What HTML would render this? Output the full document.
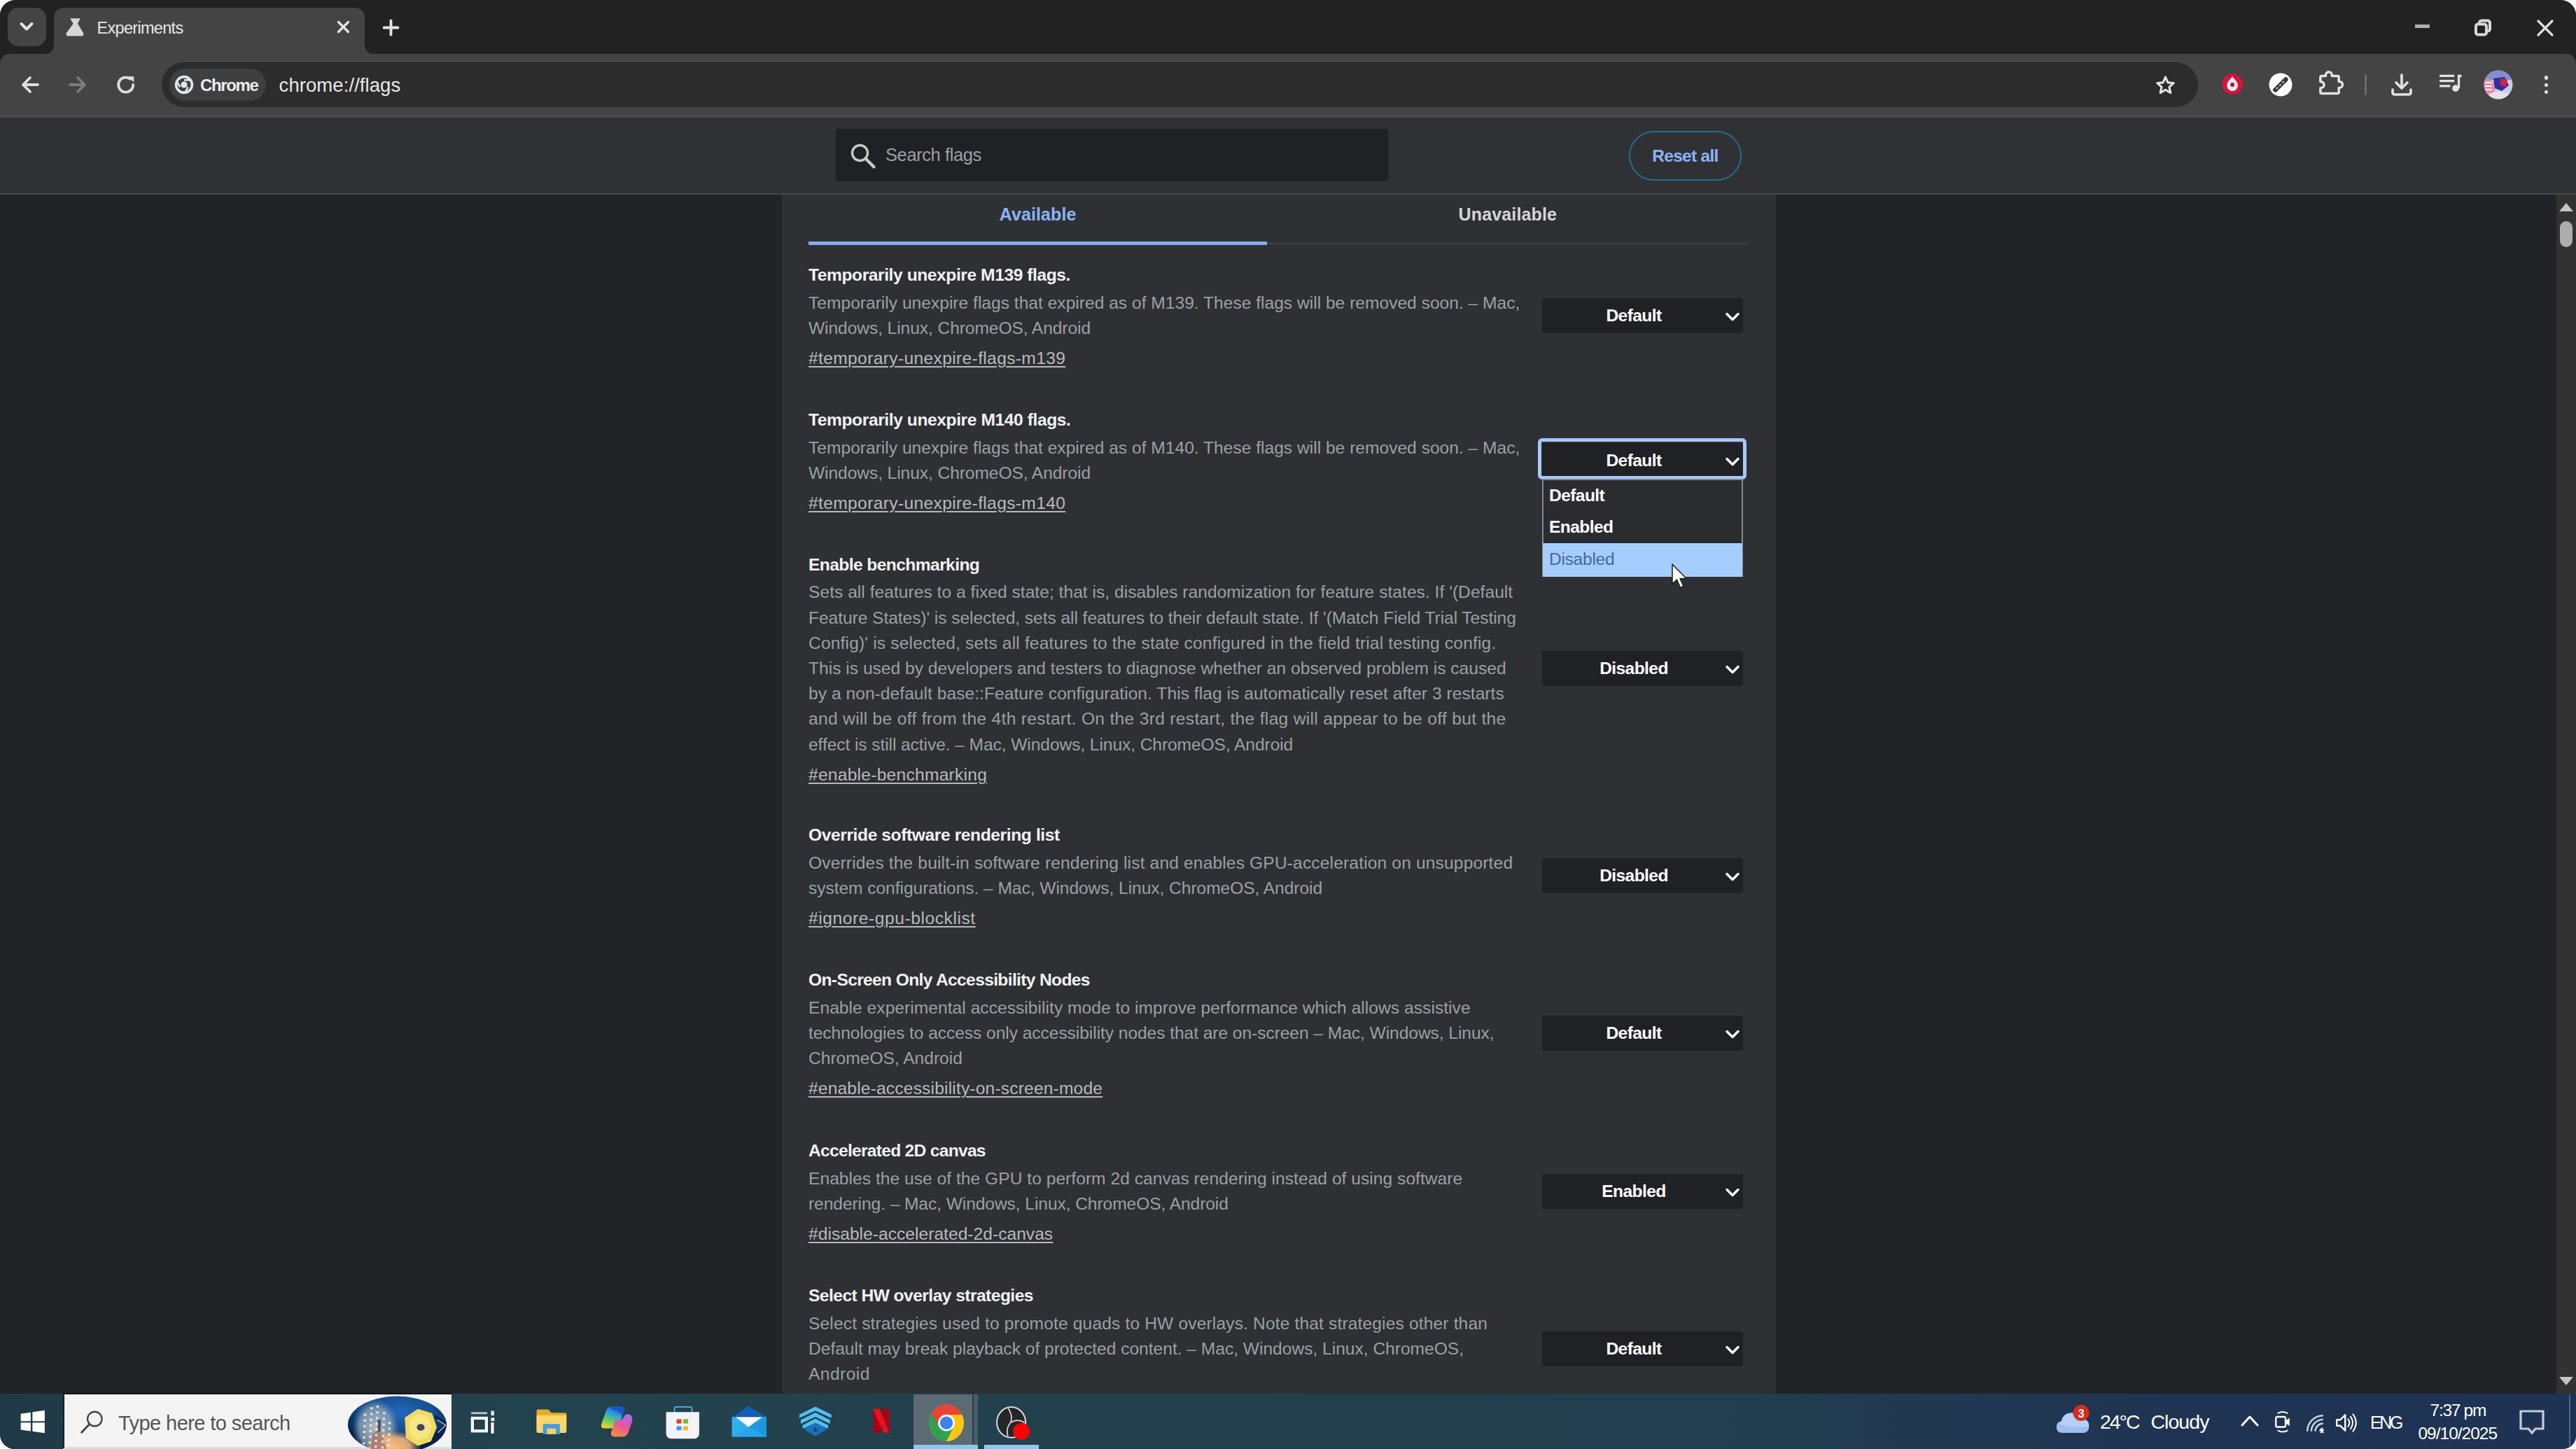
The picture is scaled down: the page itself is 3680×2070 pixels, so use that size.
<!DOCTYPE html>
<html lang="en"><head><meta charset="utf-8"><title>Experiments</title>
<style>
html,body{margin:0;padding:0;background:#fff;}
body{width:3680px;height:2070px;overflow:hidden;font-family:"Liberation Sans", sans-serif;position:relative;}
#screen{position:absolute;left:0;top:0;width:3680px;height:2070px;border-radius:22px 22px 19px 21px;overflow:hidden;background:#202124;}
#screen div, #screen svg{box-sizing:border-box;}
.u{text-decoration:underline;text-decoration-thickness:2px;text-underline-offset:3px;}
</style></head><body><div id="screen">
<div style="position:absolute;left:0px;top:0px;width:3680px;height:80px;background:#222222;"></div>
<div style="position:absolute;left:11px;top:11px;width:55px;height:55px;background:#444444;border-radius:15px;"></div>
<svg style="position:absolute;left:27px;top:29px;" width="22" height="18" viewBox="0 0 22 18"><path d="M3.5 5 L11 12.5 L18.5 5" fill="none" stroke="#e3e3e3" stroke-width="4" stroke-linecap="round" stroke-linejoin="round"/></svg>
<div style="position:absolute;left:0px;top:77px;width:3680px;height:88px;background:#444444;border-radius:14px 14px 0 0;"></div>
<svg style="position:absolute;left:61px;top:11px;" width="476" height="67" viewBox="0 0 476 67"><path d="M0 67 Q16 67 16 51 L16 16 Q16 0 32 0 L444 0 Q460 0 460 16 L460 51 Q460 67 476 67 Z" fill="#444444"/></svg>
<svg style="position:absolute;left:93.0px;top:24.8px;" width="27.9" height="27.5" viewBox="280 210 600 590"><path d="M450 235 H730 Q742 235 738 250 L668 400 L842 690 Q868 776 790 778 H370 Q292 776 318 690 L532 400 L442 250 Q438 235 450 235 Z" fill="#d6d6d6"/></svg>
<div class="" style="position:absolute;top:24.9px;height:31px;line-height:31px;font-size:23.5px;color:#e8e8e8;font-weight:normal;white-space:nowrap;letter-spacing:-0.692px;left:138.5px;">Experiments</div>
<svg style="position:absolute;left:480.3px;top:28.3px;" width="21" height="21" viewBox="0 0 24 24"><path d="M4 4 L20 20 M20 4 L4 20" stroke="#e3e3e3" stroke-width="3.9" stroke-linecap="round"/></svg>
<svg style="position:absolute;left:546.2px;top:27px;" width="25" height="25" viewBox="0 0 30 30"><path d="M15 3 V27 M3 15 H27" stroke="#e3e3e3" stroke-width="4.6" stroke-linecap="round"/></svg>
<div style="position:absolute;left:3450px;top:35px;width:21px;height:5px;background:#b0b0b0;"></div>
<svg style="position:absolute;left:3534px;top:27px;" width="26" height="26" viewBox="0 0 26 26"><rect x="8" y="2.5" width="15" height="15" rx="3" fill="none" stroke="#d8d8d8" stroke-width="4"/><rect x="3" y="7.5" width="15" height="15" rx="3" fill="#222" stroke="#d8d8d8" stroke-width="4"/></svg>
<svg style="position:absolute;left:3623px;top:27px;" width="26" height="26" viewBox="0 0 26 26"><path d="M3 3 L23 23 M23 3 L3 23" stroke="#dddddd" stroke-width="3.2" stroke-linecap="round"/></svg>
<svg style="position:absolute;left:29px;top:107px;" width="28" height="28" viewBox="0 0 28 28"><path d="M25 14 H5 M14 4 L4 14 L14 24" fill="none" stroke="#dedede" stroke-width="3.8" stroke-linecap="round" stroke-linejoin="round"/></svg>
<svg style="position:absolute;left:97px;top:107px;" width="28" height="28" viewBox="0 0 28 28"><path d="M3 14 H23 M14 4 L24 14 L14 24" fill="none" stroke="#7d7d7d" stroke-width="3.8" stroke-linecap="round" stroke-linejoin="round"/></svg>
<svg style="position:absolute;left:165px;top:106px;" width="30" height="30" viewBox="0 0 28 28"><path d="M23.5 14 A9.8 9.8 0 1 1 19.5 6.2" fill="none" stroke="#dedede" stroke-width="3.6" stroke-linecap="round"/><path d="M16.5 3 H24.5 V11 Z" fill="#dedede"/></svg>
<div style="position:absolute;left:231px;top:89px;width:2909px;height:64px;background:#2c2c2c;border-radius:32px;"></div>
<div style="position:absolute;left:242px;top:98px;width:138px;height:46px;background:#3e3f41;border-radius:23px;"></div>
<svg style="position:absolute;left:249px;top:107px;" width="28" height="28" viewBox="0 0 28 28"><circle cx="14" cy="14" r="11.4" fill="none" stroke="#e6e6e6" stroke-width="3.6"/><circle cx="14" cy="14" r="4.6" fill="#e6e6e6"/><circle cx="14" cy="14" r="6.6" fill="none" stroke="#3e3f41" stroke-width="1.6"/><path d="M14 7.4 H24.6 M8.3 17.3 L3 8.2 M19.7 17.3 L14.4 26.4" stroke="#e6e6e6" stroke-width="2.6"/></svg>
<div class="" style="position:absolute;top:105.8px;height:31px;line-height:31px;font-size:24px;color:#ececec;font-weight:bold;white-space:nowrap;letter-spacing:-1.365px;left:286px;">Chrome</div>
<div class="" style="position:absolute;top:103.6px;height:36px;line-height:36px;font-size:27.5px;color:#e8e8e8;font-weight:normal;white-space:nowrap;letter-spacing:0.07px;left:398.6px;">chrome://flags</div>
<svg style="position:absolute;left:3079px;top:107px;" width="29" height="29" viewBox="0 0 32 32"><path d="M16 3.5 L19.8 12 L29 12.9 L22 19.1 L24.1 28.2 L16 23.4 L7.9 28.2 L10 19.1 L3 12.9 L12.2 12 Z" fill="none" stroke="#e3e3e3" stroke-width="3.4" stroke-linejoin="round"/></svg>
<svg style="position:absolute;left:3173.5px;top:105.4px;" width="30.3" height="30.3" viewBox="975 175 260 260"><circle cx="1105" cy="305" r="127" fill="#d8123f"/><path d="M1105 212 C1130 250 1172 275 1172 322 A67 67 0 0 1 1038 322 C1038 275 1080 250 1105 212 Z" fill="#ffe9ef"/><circle cx="1105" cy="312" r="25" fill="#a80f30"/></svg>
<svg style="position:absolute;left:3241px;top:104px;" width="34" height="34" viewBox="0 0 34 34"><circle cx="17" cy="17" r="16.5" fill="#ffffff"/><path d="M9.5 24.5 L24.5 9.5" stroke="#3a3a3a" stroke-width="6.5" stroke-linecap="round"/><path d="M11 23 L23 11" stroke="#e8e8e8" stroke-width="1.6" stroke-dasharray="3 3"/></svg>
<svg style="position:absolute;left:3310.4px;top:100.1px;" width="38.4" height="37.3" viewBox="2150 130 330 320"><path d="M2192 217 Q2192 202 2207 202 H2257 V192 a38 38 0 0 1 76 0 V202 H2403 Q2418 202 2418 217 V272 H2426 a38 38 0 0 1 0 76 H2418 V403 Q2418 418 2403 418 H2207 Q2192 418 2192 403 V350 H2198 a38 38 0 0 0 0 -76 H2192 Z" fill="none" stroke="#e3e3e3" stroke-width="30" stroke-linejoin="round"/></svg>
<div style="position:absolute;left:3378px;top:106px;width:3px;height:30px;background:#6c6c6c;border-radius:2px;"></div>
<svg style="position:absolute;left:3413px;top:103px;" width="36" height="36" viewBox="0 0 36 36"><path d="M18 4 V22 M10 15 L18 23 L26 15" fill="none" stroke="#e3e3e3" stroke-width="3.6" stroke-linecap="round" stroke-linejoin="round"/><path d="M5 25 V29 Q5 32 8 32 H28 Q31 32 31 29 V25" fill="none" stroke="#e3e3e3" stroke-width="3.6" stroke-linecap="round"/></svg>
<svg style="position:absolute;left:3482.5px;top:104.8px;" width="34.9" height="27.9" viewBox="880 170 300 240"><path d="M898 200 H1080 M898 262 H1080 M898 324 H1030" stroke="#e3e3e3" stroke-width="28"/><path d="M1134 196 V350" stroke="#e3e3e3" stroke-width="28"/><path d="M1120 200 H1168" stroke="#e3e3e3" stroke-width="30"/><circle cx="1095" cy="352" r="42" fill="#e3e3e3"/></svg>
<svg style="position:absolute;left:3548px;top:100px;" width="42" height="42" viewBox="0 0 42 42"><defs><clipPath id="av"><circle cx="21" cy="21" r="20.5"/></clipPath></defs><g clip-path="url(#av)"><rect width="42" height="42" fill="#c9cde6"/><rect x="0" y="0" width="42" height="14" fill="#7f8fd0"/><path d="M0 14 Q8 10 14 18 T12 34 L0 36 Z" fill="#e78aa0"/><path d="M2 18 h10 M2 23 h10 M3 28 h9" stroke="#fff" stroke-width="2"/><path d="M14 12 L30 10 L36 22 L26 30 L16 26 Z" fill="#2a2fa8"/><path d="M24 12 L34 14 L32 24 L24 22 Z" fill="#d8203a"/><path d="M8 34 Q21 28 36 34 L36 42 L8 42 Z" fill="#e9dfe4"/></g></svg>
<div style="position:absolute;left:3634.6px;top:108.4px;width:5.6px;height:5.6px;background:#e3e3e3;border-radius:50%;"></div>
<div style="position:absolute;left:3634.6px;top:118.5px;width:5.6px;height:5.6px;background:#e3e3e3;border-radius:50%;"></div>
<div style="position:absolute;left:3634.6px;top:128.79999999999998px;width:5.6px;height:5.6px;background:#e3e3e3;border-radius:50%;"></div>
<div style="position:absolute;left:0px;top:165px;width:3680px;height:1828px;background:#222327;"></div>
<div style="position:absolute;left:1117px;top:278px;width:1420px;height:1715px;background:#2e3033;"></div>
<div style="position:absolute;left:0px;top:165px;width:3680px;height:112px;background:#303134;"></div>
<div style="position:absolute;left:0px;top:165px;width:3680px;height:3px;background:#4a4a4a;"></div>
<div style="position:absolute;left:0px;top:276px;width:3680px;height:2px;background:#46484b;"></div>
<div style="position:absolute;left:1194px;top:184px;width:789px;height:75px;background:#202124;border-radius:4px;"></div>
<svg style="position:absolute;left:1212px;top:202px;" width="42" height="42" viewBox="0 0 42 42"><circle cx="16.5" cy="16.5" r="11" fill="none" stroke="#c8c8c8" stroke-width="3.4"/><path d="M24.5 24.5 L36.5 36.5" stroke="#c8c8c8" stroke-width="4.4" stroke-linecap="round"/></svg>
<div class="" style="position:absolute;top:204.7px;height:33px;line-height:33px;font-size:25.5px;color:#9aa0a6;font-weight:normal;white-space:nowrap;letter-spacing:-0.4px;left:1265px;">Search flags</div>
<div style="position:absolute;left:2327px;top:187px;width:161px;height:71px;background:transparent;border:2.5px solid #1f6f8f;border-radius:36px;"></div>
<div class="" style="position:absolute;top:207.3px;height:32px;line-height:32px;font-size:24.5px;color:#8ab4f8;font-weight:bold;white-space:nowrap;letter-spacing:-0.7px;left:1407.5px;width:2000px;text-align:center;">Reset all</div>
<div class="" style="position:absolute;top:290.2px;height:32px;line-height:32px;font-size:25px;color:#8ab4f8;font-weight:bold;white-space:nowrap;letter-spacing:0.116px;left:1427.7px;">Available</div>
<div class="" style="position:absolute;top:290.2px;height:32px;line-height:32px;font-size:25px;color:#d5d7da;font-weight:bold;white-space:nowrap;letter-spacing:0.141px;left:2083.6px;">Unavailable</div>
<div style="position:absolute;left:1155px;top:347px;width:1342px;height:2px;background:#3f4144;"></div>
<div style="position:absolute;left:1155px;top:344.5px;width:655px;height:5px;background:#84adf0;"></div>
<div style="position:absolute;left:3652px;top:278px;width:28px;height:1715px;background:#323232;"></div>
<svg style="position:absolute;left:3655px;top:289px;" width="22" height="14" viewBox="0 0 22 14"><path d="M11 1 L21 13 H1 Z" fill="#c4c4c4"/></svg>
<svg style="position:absolute;left:3655px;top:1966px;" width="22" height="14" viewBox="0 0 22 14"><path d="M11 13 L21 1 H1 Z" fill="#c4c4c4"/></svg>
<div style="position:absolute;left:3657px;top:316px;width:18px;height:37px;background:#adadad;border-radius:9px;"></div>
<div class="" style="position:absolute;top:377.3px;height:32px;line-height:32px;font-size:24.6px;color:#f1f3f4;font-weight:bold;white-space:nowrap;letter-spacing:-0.429px;left:1155px;">Temporarily unexpire M139 flags.</div>
<div class="" style="position:absolute;top:416.8px;height:32px;line-height:32px;font-size:24.6px;color:#9aa0a6;font-weight:normal;white-space:nowrap;letter-spacing:-0.002px;left:1155px;">Temporarily unexpire flags that expired as of M139. These flags will be removed soon. – Mac,</div>
<div class="" style="position:absolute;top:453.0px;height:32px;line-height:32px;font-size:24.6px;color:#9aa0a6;font-weight:normal;white-space:nowrap;letter-spacing:-0.09px;left:1155px;">Windows, Linux, ChromeOS, Android</div>
<div class="u" style="position:absolute;top:496.0px;height:32px;line-height:32px;font-size:24.6px;color:#b6babf;font-weight:normal;white-space:nowrap;letter-spacing:0.351px;left:1155px;">#temporary-unexpire-flags-m139</div>
<div style="position:absolute;left:2203px;top:425.85px;width:287px;height:50px;background:#202124;border-radius:3px;"></div>
<div class="" style="position:absolute;top:435.1px;height:32px;line-height:32px;font-size:24.6px;color:#ffffff;font-weight:bold;white-space:nowrap;letter-spacing:-0.6px;left:1334px;width:2000px;text-align:center;">Default</div>
<svg style="position:absolute;left:2463px;top:443.85px;" width="24" height="18" viewBox="0 0 24 18"><path d="M4 4.5 L12 12.5 L20 4.5" fill="none" stroke="#ffffff" stroke-width="3.5" stroke-linecap="round" stroke-linejoin="round"/></svg>
<div class="" style="position:absolute;top:584.3px;height:32px;line-height:32px;font-size:24.6px;color:#f1f3f4;font-weight:bold;white-space:nowrap;letter-spacing:-0.413px;left:1155px;">Temporarily unexpire M140 flags.</div>
<div class="" style="position:absolute;top:623.8px;height:32px;line-height:32px;font-size:24.6px;color:#9aa0a6;font-weight:normal;white-space:nowrap;letter-spacing:-0.002px;left:1155px;">Temporarily unexpire flags that expired as of M140. These flags will be removed soon. – Mac,</div>
<div class="" style="position:absolute;top:660.0px;height:32px;line-height:32px;font-size:24.6px;color:#9aa0a6;font-weight:normal;white-space:nowrap;letter-spacing:-0.09px;left:1155px;">Windows, Linux, ChromeOS, Android</div>
<div class="u" style="position:absolute;top:703.0px;height:32px;line-height:32px;font-size:24.6px;color:#b6babf;font-weight:normal;white-space:nowrap;letter-spacing:0.351px;left:1155px;">#temporary-unexpire-flags-m140</div>
<div style="position:absolute;left:2203px;top:632.85px;width:287px;height:50px;background:#202124;border-radius:3px;"></div>
<div class="" style="position:absolute;top:642.1px;height:32px;line-height:32px;font-size:24.6px;color:#ffffff;font-weight:bold;white-space:nowrap;letter-spacing:-0.6px;left:1334px;width:2000px;text-align:center;">Default</div>
<svg style="position:absolute;left:2463px;top:650.85px;" width="24" height="18" viewBox="0 0 24 18"><path d="M4 4.5 L12 12.5 L20 4.5" fill="none" stroke="#ffffff" stroke-width="3.5" stroke-linecap="round" stroke-linejoin="round"/></svg>
<div class="" style="position:absolute;top:790.8px;height:32px;line-height:32px;font-size:24.6px;color:#f1f3f4;font-weight:bold;white-space:nowrap;letter-spacing:-0.594px;left:1155px;">Enable benchmarking</div>
<div class="" style="position:absolute;top:830.3px;height:32px;line-height:32px;font-size:24.6px;color:#9aa0a6;font-weight:normal;white-space:nowrap;letter-spacing:0.022px;left:1155px;">Sets all features to a fixed state; that is, disables randomization for feature states. If &#x27;(Default</div>
<div class="" style="position:absolute;top:866.5px;height:32px;line-height:32px;font-size:24.6px;color:#9aa0a6;font-weight:normal;white-space:nowrap;letter-spacing:-0.068px;left:1155px;">Feature States)&#x27; is selected, sets all features to their default state. If &#x27;(Match Field Trial Testing</div>
<div class="" style="position:absolute;top:902.7px;height:32px;line-height:32px;font-size:24.6px;color:#9aa0a6;font-weight:normal;white-space:nowrap;letter-spacing:0.156px;left:1155px;">Config)&#x27; is selected, sets all features to the state configured in the field trial testing config.</div>
<div class="" style="position:absolute;top:938.9px;height:32px;line-height:32px;font-size:24.6px;color:#9aa0a6;font-weight:normal;white-space:nowrap;left:1155px;">This is used by developers and testers to diagnose whether an observed problem is caused</div>
<div class="" style="position:absolute;top:975.1px;height:32px;line-height:32px;font-size:24.6px;color:#9aa0a6;font-weight:normal;white-space:nowrap;letter-spacing:0.033px;left:1155px;">by a non-default base::Feature configuration. This flag is automatically reset after 3 restarts</div>
<div class="" style="position:absolute;top:1011.3px;height:32px;line-height:32px;font-size:24.6px;color:#9aa0a6;font-weight:normal;white-space:nowrap;letter-spacing:0.308px;left:1155px;">and will be off from the 4th restart. On the 3rd restart, the flag will appear to be off but the</div>
<div class="" style="position:absolute;top:1047.5px;height:32px;line-height:32px;font-size:24.6px;color:#9aa0a6;font-weight:normal;white-space:nowrap;letter-spacing:-0.091px;left:1155px;">effect is still active. – Mac, Windows, Linux, ChromeOS, Android</div>
<div class="u" style="position:absolute;top:1090.5px;height:32px;line-height:32px;font-size:24.6px;color:#b6babf;font-weight:normal;white-space:nowrap;letter-spacing:0.245px;left:1155px;">#enable-benchmarking</div>
<div style="position:absolute;left:2203px;top:929.85px;width:287px;height:50px;background:#202124;border-radius:3px;"></div>
<div class="" style="position:absolute;top:939.1px;height:32px;line-height:32px;font-size:24.6px;color:#ffffff;font-weight:bold;white-space:nowrap;letter-spacing:-0.6px;left:1334px;width:2000px;text-align:center;">Disabled</div>
<svg style="position:absolute;left:2463px;top:947.85px;" width="24" height="18" viewBox="0 0 24 18"><path d="M4 4.5 L12 12.5 L20 4.5" fill="none" stroke="#ffffff" stroke-width="3.5" stroke-linecap="round" stroke-linejoin="round"/></svg>
<div class="" style="position:absolute;top:1177.3px;height:32px;line-height:32px;font-size:24.6px;color:#f1f3f4;font-weight:bold;white-space:nowrap;letter-spacing:-0.405px;left:1155px;">Override software rendering list</div>
<div class="" style="position:absolute;top:1216.8px;height:32px;line-height:32px;font-size:24.6px;color:#9aa0a6;font-weight:normal;white-space:nowrap;letter-spacing:0.137px;left:1155px;">Overrides the built-in software rendering list and enables GPU-acceleration on unsupported</div>
<div class="" style="position:absolute;top:1253.0px;height:32px;line-height:32px;font-size:24.6px;color:#9aa0a6;font-weight:normal;white-space:nowrap;letter-spacing:-0.064px;left:1155px;">system configurations. – Mac, Windows, Linux, ChromeOS, Android</div>
<div class="u" style="position:absolute;top:1296.0px;height:32px;line-height:32px;font-size:24.6px;color:#b6babf;font-weight:normal;white-space:nowrap;letter-spacing:0.56px;left:1155px;">#ignore-gpu-blocklist</div>
<div style="position:absolute;left:2203px;top:1225.85px;width:287px;height:50px;background:#202124;border-radius:3px;"></div>
<div class="" style="position:absolute;top:1235.1px;height:32px;line-height:32px;font-size:24.6px;color:#ffffff;font-weight:bold;white-space:nowrap;letter-spacing:-0.6px;left:1334px;width:2000px;text-align:center;">Disabled</div>
<svg style="position:absolute;left:2463px;top:1243.85px;" width="24" height="18" viewBox="0 0 24 18"><path d="M4 4.5 L12 12.5 L20 4.5" fill="none" stroke="#ffffff" stroke-width="3.5" stroke-linecap="round" stroke-linejoin="round"/></svg>
<div class="" style="position:absolute;top:1384.3px;height:32px;line-height:32px;font-size:24.6px;color:#f1f3f4;font-weight:bold;white-space:nowrap;letter-spacing:-0.655px;left:1155px;">On-Screen Only Accessibility Nodes</div>
<div class="" style="position:absolute;top:1423.8px;height:32px;line-height:32px;font-size:24.6px;color:#9aa0a6;font-weight:normal;white-space:nowrap;letter-spacing:0.029px;left:1155px;">Enable experimental accessibility mode to improve performance which allows assistive</div>
<div class="" style="position:absolute;top:1460.0px;height:32px;line-height:32px;font-size:24.6px;color:#9aa0a6;font-weight:normal;white-space:nowrap;letter-spacing:-0.068px;left:1155px;">technologies to access only accessibility nodes that are on-screen – Mac, Windows, Linux,</div>
<div class="" style="position:absolute;top:1496.2px;height:32px;line-height:32px;font-size:24.6px;color:#9aa0a6;font-weight:normal;white-space:nowrap;letter-spacing:-0.011px;left:1155px;">ChromeOS, Android</div>
<div class="u" style="position:absolute;top:1539.2px;height:32px;line-height:32px;font-size:24.6px;color:#b6babf;font-weight:normal;white-space:nowrap;letter-spacing:0.164px;left:1155px;">#enable-accessibility-on-screen-mode</div>
<div style="position:absolute;left:2203px;top:1450.95px;width:287px;height:50px;background:#202124;border-radius:3px;"></div>
<div class="" style="position:absolute;top:1460.2px;height:32px;line-height:32px;font-size:24.6px;color:#ffffff;font-weight:bold;white-space:nowrap;letter-spacing:-0.6px;left:1334px;width:2000px;text-align:center;">Default</div>
<svg style="position:absolute;left:2463px;top:1468.95px;" width="24" height="18" viewBox="0 0 24 18"><path d="M4 4.5 L12 12.5 L20 4.5" fill="none" stroke="#ffffff" stroke-width="3.5" stroke-linecap="round" stroke-linejoin="round"/></svg>
<div class="" style="position:absolute;top:1628.3px;height:32px;line-height:32px;font-size:24.6px;color:#f1f3f4;font-weight:bold;white-space:nowrap;letter-spacing:-0.722px;left:1155px;">Accelerated 2D canvas</div>
<div class="" style="position:absolute;top:1667.8px;height:32px;line-height:32px;font-size:24.6px;color:#9aa0a6;font-weight:normal;white-space:nowrap;letter-spacing:0.022px;left:1155px;">Enables the use of the GPU to perform 2d canvas rendering instead of using software</div>
<div class="" style="position:absolute;top:1704.0px;height:32px;line-height:32px;font-size:24.6px;color:#9aa0a6;font-weight:normal;white-space:nowrap;letter-spacing:-0.086px;left:1155px;">rendering. – Mac, Windows, Linux, ChromeOS, Android</div>
<div class="u" style="position:absolute;top:1747.0px;height:32px;line-height:32px;font-size:24.6px;color:#b6babf;font-weight:normal;white-space:nowrap;letter-spacing:0.019px;left:1155px;">#disable-accelerated-2d-canvas</div>
<div style="position:absolute;left:2203px;top:1676.85px;width:287px;height:50px;background:#202124;border-radius:3px;"></div>
<div class="" style="position:absolute;top:1686.1px;height:32px;line-height:32px;font-size:24.6px;color:#ffffff;font-weight:bold;white-space:nowrap;letter-spacing:-0.6px;left:1334px;width:2000px;text-align:center;">Enabled</div>
<svg style="position:absolute;left:2463px;top:1694.85px;" width="24" height="18" viewBox="0 0 24 18"><path d="M4 4.5 L12 12.5 L20 4.5" fill="none" stroke="#ffffff" stroke-width="3.5" stroke-linecap="round" stroke-linejoin="round"/></svg>
<div class="" style="position:absolute;top:1835.3px;height:32px;line-height:32px;font-size:24.6px;color:#f1f3f4;font-weight:bold;white-space:nowrap;letter-spacing:-0.549px;left:1155px;">Select HW overlay strategies</div>
<div class="" style="position:absolute;top:1874.8px;height:32px;line-height:32px;font-size:24.6px;color:#9aa0a6;font-weight:normal;white-space:nowrap;letter-spacing:0.135px;left:1155px;">Select strategies used to promote quads to HW overlays. Note that strategies other than</div>
<div class="" style="position:absolute;top:1911.0px;height:32px;line-height:32px;font-size:24.6px;color:#9aa0a6;font-weight:normal;white-space:nowrap;letter-spacing:-0.021px;left:1155px;">Default may break playback of protected content. – Mac, Windows, Linux, ChromeOS,</div>
<div class="" style="position:absolute;top:1947.2px;height:32px;line-height:32px;font-size:24.6px;color:#9aa0a6;font-weight:normal;white-space:nowrap;letter-spacing:0.446px;left:1155px;">Android</div>
<div style="position:absolute;left:2203px;top:1901.95px;width:287px;height:50px;background:#202124;border-radius:3px;"></div>
<div class="" style="position:absolute;top:1911.2px;height:32px;line-height:32px;font-size:24.6px;color:#ffffff;font-weight:bold;white-space:nowrap;letter-spacing:-0.6px;left:1334px;width:2000px;text-align:center;">Default</div>
<svg style="position:absolute;left:2463px;top:1919.95px;" width="24" height="18" viewBox="0 0 24 18"><path d="M4 4.5 L12 12.5 L20 4.5" fill="none" stroke="#ffffff" stroke-width="3.5" stroke-linecap="round" stroke-linejoin="round"/></svg>
<div style="position:absolute;left:2197px;top:626px;width:298px;height:59px;background:transparent;border:5px solid #a8c7fa;border-radius:6px;"></div>
<div style="position:absolute;left:2203px;top:684px;width:287px;height:140px;background:#2b2c2f;border:2px solid #85888c;border-bottom:none;"></div>
<div class="" style="position:absolute;top:691.8px;height:32px;line-height:32px;font-size:24.6px;color:#ffffff;font-weight:bold;white-space:nowrap;letter-spacing:-0.6px;left:2213px;">Default</div>
<div class="" style="position:absolute;top:737.3px;height:32px;line-height:32px;font-size:24.6px;color:#ffffff;font-weight:bold;white-space:nowrap;letter-spacing:-0.6px;left:2213px;">Enabled</div>
<div style="position:absolute;left:2204px;top:776px;width:285px;height:48px;background:#a5cdfd;"></div>
<div class="" style="position:absolute;top:783.3px;height:32px;line-height:32px;font-size:24.6px;color:#46689f;font-weight:normal;white-space:nowrap;letter-spacing:-0.3px;left:2213px;">Disabled</div>
<svg style="position:absolute;left:2387px;top:804px;" width="26" height="40" viewBox="0 0 26 40"><path d="M2 2 L2 30 L8.5 24 L13.5 35.5 L18 33.5 L13 22.5 L22 22.5 Z" fill="#ffffff" stroke="#222" stroke-width="1.6" stroke-linejoin="round"/></svg>
<div style="position:absolute;left:0px;top:1991px;width:3680px;height:79px;background:linear-gradient(90deg,#1f3a46 0%,#22424e 20%,#233f4c 55%,#223d4f 68%,#203851 76%,#1f3452 84%,#1e3254 100%);"></div>
<svg style="position:absolute;left:27.5px;top:2013.3px;" width="37.5" height="36" viewBox="0 0 46 44"><path d="M2 8.2 L19.5 5.6 V21 H2 Z M22.5 5.2 L44 2 V21 H22.5 Z M2 23.5 H19.5 V38.6 L2 36 Z M22.5 23.5 H44 V42 L22.5 39 Z" fill="#ffffff"/></svg>
<div style="position:absolute;left:90px;top:1990px;width:555px;height:80px;background:#f4f4f4;border-top:2.5px solid #10151b;border-left:2px solid #10202a;border-bottom:3px solid #dcdcdc;"></div>
<svg style="position:absolute;left:112.5px;top:2014.5px;" width="37" height="37" viewBox="0 0 36 36"><circle cx="21.7" cy="11.7" r="10" fill="none" stroke="#444" stroke-width="2.3"/><path d="M14.5 19 L3.5 30.5" stroke="#444" stroke-width="2.8" stroke-linecap="round"/></svg>
<div class="" style="position:absolute;top:2014.0px;height:38px;line-height:38px;font-size:29px;color:#555555;font-weight:normal;white-space:nowrap;letter-spacing:-0.57px;left:169px;">Type here to search</div>
<svg style="position:absolute;left:496.4px;top:1994.3px;" width="142.9" height="75.7" viewBox="340 120 1840 975"><defs><clipPath id="sh"><ellipse cx="1260" cy="650" rx="908" ry="522"/></clipPath><radialGradient id="shg" cx="0.52" cy="0.3" r="0.62"><stop offset="0" stop-color="#2566bd"/><stop offset="0.55" stop-color="#154f8f"/><stop offset="1" stop-color="#07214a"/></radialGradient><radialGradient id="shl" cx="0.5" cy="0.5" r="0.5"><stop offset="0" stop-color="#b9c3c4" stop-opacity="0.95"/><stop offset="0.7" stop-color="#8fa4b4" stop-opacity="0.75"/><stop offset="1" stop-color="#5f86ab" stop-opacity="0"/></radialGradient><radialGradient id="sho" cx="0.5" cy="0.5" r="0.5"><stop offset="0" stop-color="#f6c07c"/><stop offset="0.6" stop-color="#eeb27a" stop-opacity="0.9"/><stop offset="1" stop-color="#e0a070" stop-opacity="0"/></radialGradient></defs><g clip-path="url(#sh)"><rect x="340" y="120" width="1840" height="980" fill="url(#shg)"/><ellipse cx="860" cy="700" rx="430" ry="520" fill="url(#shl)"/><ellipse cx="1180" cy="1060" rx="520" ry="300" fill="url(#sho)"/><path d="M820 820 Q900 700 980 820 L1060 1095 H760 Z" fill="#a8766a" opacity="0.8"/><path d="M900 560 L960 560 L950 780 L905 780 Z" fill="#2a2a32" opacity="0.7"/><rect x="648" y="450" width="44" height="40" fill="#f4f2ea" opacity="0.85"/><rect x="643" y="555" width="44" height="40" fill="#f4f2ea" opacity="0.85"/><rect x="638" y="660" width="44" height="40" fill="#f4f2ea" opacity="0.85"/><rect x="632" y="765" width="44" height="40" fill="#f4f2ea" opacity="0.85"/><rect x="627" y="870" width="44" height="40" fill="#f4f2ea" opacity="0.85"/><rect x="622" y="975" width="44" height="40" fill="#f4f2ea" opacity="0.85"/><rect x="768" y="330" width="44" height="40" fill="#f4f2ea" opacity="0.85"/><rect x="763" y="435" width="44" height="40" fill="#f4f2ea" opacity="0.85"/><rect x="758" y="540" width="44" height="40" fill="#f4f2ea" opacity="0.85"/><rect x="752" y="645" width="44" height="40" fill="#f4f2ea" opacity="0.85"/><rect x="747" y="750" width="44" height="40" fill="#f4f2ea" opacity="0.85"/><rect x="742" y="855" width="44" height="40" fill="#f4f2ea" opacity="0.85"/><rect x="736" y="960" width="44" height="40" fill="#f4f2ea" opacity="0.85"/><rect x="731" y="1065" width="44" height="40" fill="#f4f2ea" opacity="0.85"/><rect x="878" y="300" width="44" height="40" fill="#f4f2ea" opacity="0.85"/><rect x="873" y="405" width="44" height="40" fill="#f4f2ea" opacity="0.85"/><rect x="868" y="510" width="44" height="40" fill="#f4f2ea" opacity="0.85"/><rect x="862" y="615" width="44" height="40" fill="#f4f2ea" opacity="0.85"/><rect x="857" y="720" width="44" height="40" fill="#f4f2ea" opacity="0.85"/><rect x="852" y="825" width="44" height="40" fill="#f4f2ea" opacity="0.85"/><rect x="846" y="930" width="44" height="40" fill="#f4f2ea" opacity="0.85"/><rect x="841" y="1035" width="44" height="40" fill="#f4f2ea" opacity="0.85"/><rect x="998" y="420" width="44" height="40" fill="#f4f2ea" opacity="0.85"/><rect x="993" y="525" width="44" height="40" fill="#f4f2ea" opacity="0.85"/><rect x="988" y="630" width="44" height="40" fill="#f4f2ea" opacity="0.85"/><rect x="982" y="735" width="44" height="40" fill="#f4f2ea" opacity="0.85"/><rect x="977" y="840" width="44" height="40" fill="#f4f2ea" opacity="0.85"/><rect x="972" y="945" width="44" height="40" fill="#f4f2ea" opacity="0.85"/><rect x="966" y="1050" width="44" height="40" fill="#f4f2ea" opacity="0.85"/><rect x="1098" y="600" width="44" height="40" fill="#f4f2ea" opacity="0.85"/><rect x="1093" y="705" width="44" height="40" fill="#f4f2ea" opacity="0.85"/><rect x="1088" y="810" width="44" height="40" fill="#f4f2ea" opacity="0.85"/><rect x="1082" y="915" width="44" height="40" fill="#f4f2ea" opacity="0.85"/><rect x="1077" y="1020" width="44" height="40" fill="#f4f2ea" opacity="0.85"/><path d="M1400 520 L1640 360 L1900 440 L1990 700 L1880 960 L1640 1040 L1420 900 Z" fill="#efd95f"/><path d="M1480 560 L1660 450 L1840 520 L1900 700 L1820 880 L1650 940 L1500 840 Z" fill="#f6e684"/><ellipse cx="1692" cy="702" rx="72" ry="62" fill="#4a4262"/><path d="M1960 500 L2160 640 L1960 860" fill="none" stroke="#0a1e48" stroke-width="50"/><path d="M2000 560 L2150 660 L2010 800" fill="none" stroke="#cfd4ea" stroke-width="16"/></g></svg>
<svg style="position:absolute;left:671.8px;top:2012.5px;" width="35.7" height="35.7" viewBox="410 290 460 460"><rect x="425" y="345" width="295" height="38" fill="#b9c3cc"/><rect x="447" y="457" width="258" height="236" fill="none" stroke="#ffffff" stroke-width="54"/><rect x="790" y="322" width="56" height="86" fill="#e8ecf0"/><rect x="790" y="450" width="62" height="60" fill="#ffffff"/><rect x="790" y="535" width="52" height="205" fill="#ffffff"/></svg>
<svg style="position:absolute;left:765.2px;top:2012.2px;" width="45.6" height="37.8" viewBox="130 140 235 195"><path d="M138 158 Q138 148 148 148 H225 L248 172 H348 Q358 172 358 182 V300 H138 Z" fill="#e9aa2b"/><path d="M138 190 H358 V310 Q358 320 348 320 H148 Q138 320 138 310 Z" fill="#fcd667"/><path d="M185 262 Q185 255 192 255 H303 Q310 255 310 262 V330 H185 Z" fill="#4a9be0"/><path d="M215 288 H280 V330 H215 Z" fill="#fbd261"/></svg>
<svg style="position:absolute;left:857.4px;top:2008.3px;" width="47.6" height="45.6" viewBox="605 120 245 235"><defs><linearGradient id="cp1" x1="0.6" y1="0" x2="0.2" y2="1"><stop offset="0" stop-color="#1b5fd4"/><stop offset="0.35" stop-color="#2aa7e0"/><stop offset="0.65" stop-color="#6fcf55"/><stop offset="1" stop-color="#f6d42e"/></linearGradient><linearGradient id="cp2" x1="0.7" y1="0" x2="0.3" y2="1"><stop offset="0" stop-color="#a86af2"/><stop offset="0.5" stop-color="#e4569f"/><stop offset="1" stop-color="#f78d3a"/></linearGradient></defs><path d="M665 135 Q675 128 700 128 H765 Q790 130 780 165 L745 265 Q735 290 705 288 H640 Q605 285 618 250 L650 160 Q655 142 665 135 Z" fill="url(#cp1)"/><path d="M790 190 Q800 180 820 185 Q850 195 842 235 L815 315 Q805 348 770 350 H715 Q680 348 688 315 L715 240 Q722 222 740 222 H768 Z" fill="url(#cp2)"/><path d="M700 128 H765 Q790 130 780 165 L770 195 Q740 150 690 150 Q680 132 700 128 Z" fill="#1a56c8"/></svg>
<svg style="position:absolute;left:949.6px;top:2008.3px;" width="50.5" height="48.5" viewBox="1080 120 260 250"><path d="M1150 175 V142 Q1150 130 1162 130 H1266 Q1278 130 1278 142 V175" fill="none" stroke="#56b4e8" stroke-width="9"/><path d="M1088 168 H1332 V322 Q1332 364 1288 364 H1132 Q1088 364 1088 322 Z" fill="#f3f4f6"/><rect x="1165" y="220" width="36" height="32" fill="#e2402c"/><rect x="1214" y="220" width="36" height="32" fill="#7cb82f"/><rect x="1165" y="272" width="36" height="30" fill="#3a9ad9"/><rect x="1214" y="272" width="36" height="30" fill="#f2b632"/></svg>
<svg style="position:absolute;left:1043.8px;top:2008.3px;" width="52.4" height="45.6" viewBox="1565 120 270 235"><path d="M1695 124 L1825 205 H1573 Z" fill="#135fba"/><path d="M1573 200 H1827 V350 H1573 Z" fill="#2cb0ee"/><path d="M1695 276 L1827 200 V350 Z" fill="#1d97de"/><path d="M1573 350 L1695 276 L1827 350 Z" fill="#27a5e8"/><path d="M1598 202 H1797 L1695 278 Z" fill="#f4f9fd"/><path d="M1573 200 H1827" stroke="#0f4fa6" stroke-width="8"/></svg>
<svg style="position:absolute;left:1139.8px;top:2008.3px;" width="49.5" height="44.6" viewBox="2060 120 255 230"><path d="M2110 270 L2188 232 L2266 270 V300 L2188 346 L2110 300 Z" fill="#1c6fb8"/><path d="M2188 128 L2306 186 V212 L2188 158 L2070 212 V186 Z" fill="#55bdf0"/><path d="M2188 172 L2296 226 V254 L2188 202 L2080 254 V226 Z" fill="#55bdf0"/><path d="M2188 216 L2282 264 V290 L2188 246 L2094 290 V264 Z" fill="#55bdf0"/><path d="M2188 278 L2204 310 H2172 Z" fill="#0d3d6b"/></svg>
<svg style="position:absolute;left:1247.2px;top:2012.3px;" width="24.2" height="35.4" viewBox="380 220 195 285"><rect x="385" y="225" width="185" height="275" fill="#a80410"/><path d="M385 225 H455 L570 500 H500 Z" fill="#e8131f"/><path d="M455 225 H500 V330 Z M455 500 H500 V395 Z" fill="#22414f" opacity="0.55"/></svg>
<div style="position:absolute;left:1305px;top:1992px;width:84px;height:78px;background:#5a6b73;"></div>
<div style="position:absolute;left:1391px;top:1992px;width:6px;height:78px;background:#4a5e68;"></div>
<div style="position:absolute;left:1305px;top:2064px;width:92px;height:6px;background:#94c4ea;"></div>
<svg style="position:absolute;left:1326.7px;top:2005.5px;" width="50.3" height="53.4" viewBox="1020 165 405 430"><ellipse cx="1222" cy="380" rx="198" ry="210" fill="#ffffff"/><path d="M1222 380 L1050.500 275 A198 210 0 0 1 1393.500 275 Z" fill="#e94434"/><path d="M1222 380 L1393.500 275 A198 210 0 0 1 1222 590 Z" fill="#f9c515"/><path d="M1222 380 L1222 590 A198 210 0 0 1 1050.500 275 Z" fill="#2fa24f"/><path d="M1222 285 H1400 A198 210 0 0 0 1050.500 275 L1140 428 Z" fill="#e94434"/><path d="M1304 428 L1222 590 A198 210 0 0 0 1400 285 H1222 Z" fill="#f9c515"/><path d="M1140 428 L1050.500 275 A198 210 0 0 0 1222 590 L1304 428 Z" fill="#2fa24f"/><circle cx="1222" cy="380" r="96" fill="#ffffff"/><circle cx="1222" cy="380" r="74" fill="#3c82f0"/></svg>
<div style="position:absolute;left:1405.5px;top:2064px;width:78.5px;height:6px;background:#94c4ea;"></div>
<svg style="position:absolute;left:1421.7px;top:2008.0px;" width="50.3" height="49.7" viewBox="1785 185 405 400"><ellipse cx="1967" cy="378" rx="165" ry="176" fill="#26262a" stroke="#dcdcdc" stroke-width="16"/><path d="M1930 215 Q1990 300 1960 380 Q2040 330 2120 380 M1960 380 Q1900 450 1930 540" fill="none" stroke="#d8d8d8" stroke-width="14"/><circle cx="2085" cy="482" r="96" fill="#ff0000"/></svg>
<svg style="position:absolute;left:2937.3px;top:2006.0px;" width="49.7" height="41.9" viewBox="240 135 320 270"><path d="M300 398 Q246 398 246 345 Q246 300 290 292 Q300 225 370 215 Q440 210 465 270 Q545 265 545 335 Q545 398 490 398 Z" fill="#b4d0f8"/><path d="M300 398 Q246 398 246 345 Q246 320 262 305 Q340 360 545 340 Q540 398 490 398 Z" fill="#9cbff0"/><circle cx="472" cy="215" r="74" fill="#d92c20"/></svg>
<div class="" style="position:absolute;top:2008.9px;height:21px;line-height:21px;font-size:16px;color:#ffffff;font-weight:bold;white-space:nowrap;left:1973.3000000000002px;width:2000px;text-align:center;">3</div>
<div class="" style="position:absolute;top:2013.0px;height:37px;line-height:37px;font-size:28.5px;color:#ffffff;font-weight:normal;white-space:nowrap;letter-spacing:-2.047px;left:3000px;">24°C</div>
<div class="" style="position:absolute;top:2013.0px;height:37px;line-height:37px;font-size:28.5px;color:#ffffff;font-weight:normal;white-space:nowrap;letter-spacing:-0.936px;left:3072.4px;">Cloudy</div>
<svg style="position:absolute;left:3200px;top:2020px;" width="28" height="20" viewBox="0 0 28 20"><path d="M3 16 L14 4 L25 16" fill="none" stroke="#ffffff" stroke-width="3" stroke-linecap="round" stroke-linejoin="round"/></svg>
<svg style="position:absolute;left:3247.5px;top:2015px;" width="26" height="32.5" viewBox="0 0 32 40"><path d="M7 5 Q16 0 25 5" fill="none" stroke="#ffffff" stroke-width="2.6"/><path d="M7 35 Q16 40 25 35" fill="none" stroke="#ffffff" stroke-width="2.6"/><rect x="4" y="11" width="17" height="18" rx="3" fill="none" stroke="#ffffff" stroke-width="3"/><path d="M21 18 L28 13 V27 L21 22 Z" fill="#ffffff"/></svg>
<svg style="position:absolute;left:3293px;top:2019px;" width="29" height="29" viewBox="0 0 36 36"><path d="M4 32 A28 28 0 0 1 32 4" fill="none" stroke="#cfd6de" stroke-width="3"/><path d="M11 32 A21 21 0 0 1 32 11" fill="none" stroke="#cfd6de" stroke-width="3"/><path d="M18 32 A14 14 0 0 1 32 18" fill="none" stroke="#cfd6de" stroke-width="3"/><path d="M25 32 A7 7 0 0 1 32 25 V32 Z" fill="#cfd6de"/><path d="M27 29 L33 35 M33 29 L27 35" stroke="#ffffff" stroke-width="2"/></svg>
<svg style="position:absolute;left:3334px;top:2016.5px;" width="36" height="31" viewBox="0 0 38 36"><path d="M3 13 H9 L17 5 V31 L9 23 H3 Z" fill="none" stroke="#ffffff" stroke-width="2.8" stroke-linejoin="round"/><path d="M22 12 Q26 18 22 24 M26 8 Q33 18 26 28 M30 4 Q40 18 30 32" fill="none" stroke="#ffffff" stroke-width="2.4" stroke-linecap="round"/></svg>
<div class="" style="position:absolute;top:2015.8px;height:32px;line-height:32px;font-size:25px;color:#ffffff;font-weight:normal;white-space:nowrap;letter-spacing:-3.396px;left:3386px;">ENG</div>
<div class="" style="position:absolute;top:1998.8px;height:32px;line-height:32px;font-size:24.5px;color:#ffffff;font-weight:normal;white-space:nowrap;letter-spacing:-1.304px;left:3471.6px;">7:37 pm</div>
<div class="" style="position:absolute;top:2032.3px;height:32px;line-height:32px;font-size:24.5px;color:#ffffff;font-weight:normal;white-space:nowrap;letter-spacing:-1.012px;left:3454.5px;">09/10/2025</div>
<svg style="position:absolute;left:3598px;top:2013px;" width="38" height="40" viewBox="0 0 38 40"><path d="M3 3 H35 V28 H24 L19 34 L14 28 H3 Z" fill="none" stroke="#c3cbd8" stroke-width="3.2" stroke-linejoin="miter"/></svg>
<div style="position:absolute;left:3669.5px;top:1992px;width:2.5px;height:78px;background:#51678a;"></div>
</div></body></html>
